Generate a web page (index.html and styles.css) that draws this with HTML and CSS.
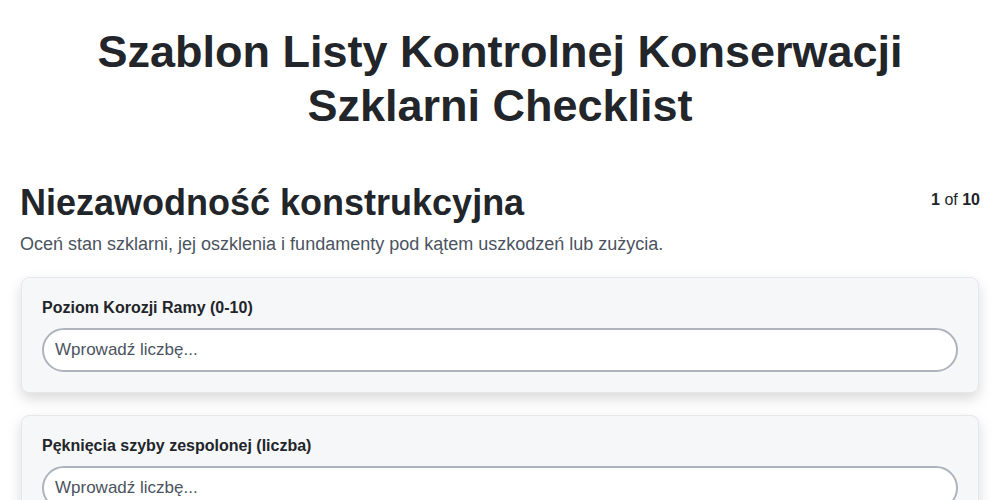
FILE: index.html
```html
<!DOCTYPE html>
<html lang="pl">
<head>
<meta charset="utf-8">
<link rel="stylesheet" href="styles.css">
</head>
<body>
<main class="page">
  <h1 class="title">Szablon Listy Kontrolnej Konserwacji Szklarni Checklist</h1>
  <section class="section">
    <div class="section-head">
      <h2 class="section-title">Niezawodność konstrukcyjna</h2>
      <div class="counter"><b>1</b> of <b>10</b></div>
    </div>
    <p class="section-desc">Oceń stan szklarni, jej oszklenia i fundamenty pod kątem uszkodzeń lub zużycia.</p>
    <div class="cards">
      <div class="card">
        <label class="label" for="q1">Poziom Korozji Ramy (0-10)</label>
        <input class="input" id="q1" type="text" placeholder="Wprowadź liczbę...">
      </div>
      <div class="card">
        <label class="label" for="q2">Pęknięcia szyby zespolonej (liczba)</label>
        <input class="input" id="q2" type="text" placeholder="Wprowadź liczbę...">
      </div>
    </div>
  </section>
</main>
</body>
</html>
```
FILE: styles.css
```css
* { box-sizing: border-box; }
body {
  margin: 0;
  font-family: "Liberation Sans", Arial, sans-serif;
  color: #222529;
  background: #fff;
}
.page {
  padding: 0 20px;
}
.title {
  margin: 0;
  padding-top: 25px;
  font-size: 45px;
  line-height: 54px;
  font-weight: 700;
  text-align: center;
  color: #222529;
}
.section {
  margin-top: 48px;
}
.section-head {
  display: flex;
  justify-content: space-between;
  align-items: flex-start;
}
.section-title {
  margin: 0;
  font-size: 36px;
  line-height: 44px;
  font-weight: 700;
}
.counter {
  font-size: 16px;
  line-height: 20px;
  padding-top: 9px;
  color: #222529;
}
.section-desc {
  margin: 8px 0 22px;
  font-size: 18px;
  line-height: 22px;
  color: #4b5360;
}
.cards {
  display: flex;
  flex-direction: column;
  gap: 22px;
  padding: 0 1px;
}
.card {
  display: flex;
  flex-direction: column;
  gap: 10px;
  padding: 20px;
  background: #f6f7f9;
  border: 1px solid #e5e7eb;
  border-radius: 8px;
  box-shadow: 0 6px 14px rgba(0, 0, 0, 0.15);
}
.label {
  font-size: 16px;
  line-height: 20px;
  font-weight: 700;
  color: #222529;
}
.input {
  height: 44px;
  padding: 0 11px;
  border: 2px solid #adb4bb;
  border-radius: 22px;
  background: #fff;
  font-family: "Liberation Sans", Arial, sans-serif;
  font-size: 17px;
  color: #222529;
  outline: none;
}
.input::placeholder {
  color: #4b5360;
  opacity: 1;
}
```
